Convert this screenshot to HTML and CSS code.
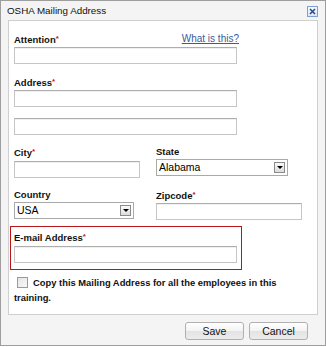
FILE: index.html
```html
<!DOCTYPE html>
<html>
<head>
<meta charset="utf-8">
<link rel="stylesheet" href="styles.css">
</head>
<body>
<div class="dialog">
  <div class="titlebar">
    <span class="title">OSHA Mailing Address</span>
    <span class="close"><svg width="9" height="9" viewBox="0 0 9 9"><path d="M2 2L7 7M7 2L2 7" stroke="#27498a" stroke-width="1.5" fill="none"/></svg></span>
  </div>
  <div class="panel">
    <div class="label-row attn">
      <span class="label">Attention<span class="req">*</span></span>
      <a class="help" href="#">What is this?</a>
    </div>
    <div class="input wide"></div>

    <div class="label addr">Address<span class="req">*</span></div>
    <div class="input wide"></div>
    <div class="input wide second"></div>

    <div class="cols row1">
      <div class="col left">
        <div class="label">City<span class="req">*</span></div>
        <div class="input city"></div>
      </div>
      <div class="col">
        <div class="label">State</div>
        <div class="select state"><span class="val">Alabama</span><span class="arrow"></span></div>
      </div>
    </div>

    <div class="cols row2">
      <div class="col left">
        <div class="label">Country</div>
        <div class="select country"><span class="val">USA</span><span class="arrow"></span></div>
      </div>
      <div class="col">
        <div class="label">Zipcode<span class="req">*</span></div>
        <div class="input zip"></div>
      </div>
    </div>

    <div class="errbox">
      <div class="label">E-mail Address<span class="req">*</span></div>
      <div class="input wide"></div>
    </div>

    <p class="copy"><span class="check"></span>Copy this Mailing Address for all the employees in this training.</p>
  </div>
  <div class="footer">
    <span class="btn">Save</span>
    <span class="btn">Cancel</span>
  </div>
</div>
</body>
</html>
```
FILE: styles.css
```css
* { box-sizing: border-box; }
html, body { margin: 0; padding: 0; background: #fff; }
body { font-family: "Liberation Sans", Arial, sans-serif; color: #000; }

.dialog {
  width: 326px;
  height: 346px;
  border: 1px solid #9e9e9e;
  background: #f4f4f4;
  display: flex;
  flex-direction: column;
}

.titlebar {
  height: 19px;
  display: flex;
  align-items: center;
  justify-content: space-between;
  padding: 0 7px 0 6px;
}
.title { font-size: 9.8px; line-height: 19px; color: #111; }
.close {
  width: 11px;
  height: 11px;
  border: 1px solid #7f9fd2;
  background: linear-gradient(#f6f9fe, #dde7f6);
  display: flex;
  align-items: center;
  justify-content: center;
  margin-top: 1px;
}
.close svg { display: block; }

.panel {
  margin: 0 7px;
  background: #fff;
  border: 1px solid #cfcfcf;
  padding: 12px 5px 9px 5px;
}

.label { font-size: 9.5px; font-weight: bold; line-height: 12px; color: #111; }
.req { color: #d0101b; font-size: 8px; vertical-align: 2px; }

.label-row { display: flex; justify-content: space-between; width: 225px; line-height: 12px; }
.help { font-size: 10px; color: #375c9a; text-decoration: underline; line-height: 12px; }

.input {
  height: 17px;
  border: 1px solid #c6c6c6;
  border-top-color: #aeaeae;
  background: #fff;
  margin-top: 1px;
  box-shadow: inset 0 1px 0 #f0f0f0;
}
.wide { width: 223px; }
.second { margin-top: 11px; }
.addr { margin-top: 12px; }

.cols { display: flex; }
.col.left { width: 142px; }
.row1 { margin-top: 11px; }
.row2 { margin-top: 11px; }
.city { width: 126px; margin-top: 2px; }
.zip { width: 146px; }

.select {
  height: 17px;
  border: 1px solid #a9a9a9;
  background: #fff;
  margin-top: 1px;
  display: flex;
  align-items: center;
  justify-content: space-between;
  padding: 0 2px 0 2px;
  font-size: 10.5px;
}
.state { width: 132px; }
.country { width: 120px; }
.val { line-height: 15px; }
.arrow {
  width: 11px;
  height: 11px;
  border: 1px solid #8a8a8a;
  background: linear-gradient(#fafafa, #dcdcdc);
  position: relative;
}
.arrow::after {
  content: "";
  position: absolute;
  left: 2px;
  top: 3px;
  border-left: 3px solid transparent;
  border-right: 3px solid transparent;
  border-top: 3px solid #000;
}

.errbox {
  margin: 6px 0 0 -4px;
  width: 232px;
  border: 1px solid #b8141b;
  padding: 4px 0 6px 3px;
}
.errbox .input { margin-top: 2px; }

.copy {
  margin: 5px 0 0 0;
  font-size: 9.4px;
  font-weight: bold;
  line-height: 15px;
  color: #111;
}
.check {
  display: inline-block;
  width: 11px;
  height: 11px;
  border: 1px solid #9a9a9a;
  background: linear-gradient(135deg, #e6e6e6, #f8f8f8);
  vertical-align: -2px;
  margin: 0 5px 0 3px;
}

.footer {
  display: flex;
  justify-content: flex-end;
  gap: 5px;
  padding: 7px 17px 0 0;
}
.btn {
  width: 59px;
  height: 18px;
  border: 1px solid #b0b0b0;
  border-radius: 3px;
  background: linear-gradient(#ffffff, #f3f3f3 50%, #e3e3e3 51%, #ececec);
  font-size: 10.5px;
  line-height: 16px;
  text-align: center;
  color: #111;
}
```
